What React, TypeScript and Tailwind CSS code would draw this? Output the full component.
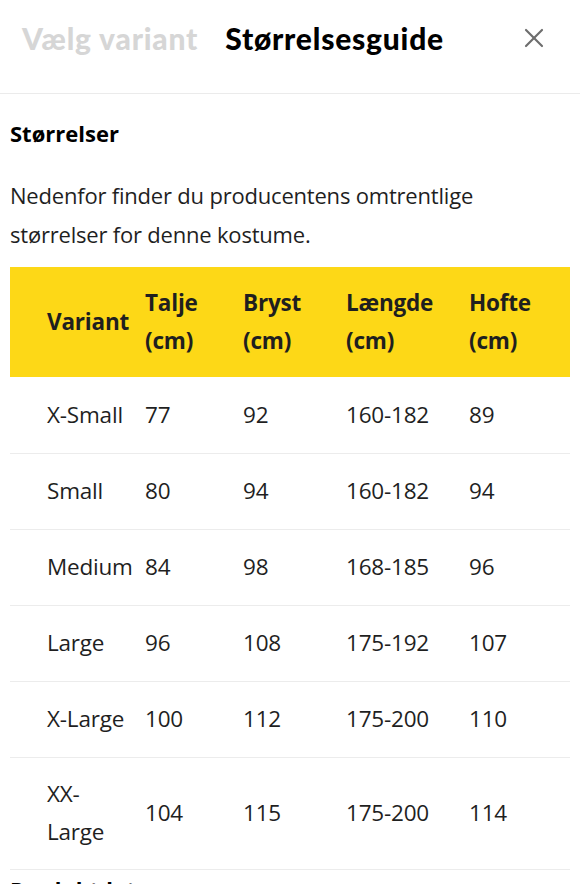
import { X } from "lucide-react";

const ROWS = [
  ["X-Small", "77", "92", "160-182", "89"],
  ["Small", "80", "94", "160-182", "94"],
  ["Medium", "84", "98", "168-185", "96"],
  ["Large", "96", "108", "175-192", "107"],
  ["X-Large", "100", "112", "175-200", "110"],
  ["XX-Large", "104", "115", "175-200", "114"],
];

const HEADS = ["Talje", "Bryst", "Længde", "Hofte"];

export default function App() {
  return (
    <div className="w-[580px] h-[884px] overflow-hidden bg-white text-[#1f1f1f] font-['Open_Sans',sans-serif]">
      <header className="h-[94px] flex items-start border-b border-[#ebebeb] pt-[18px] pl-[22px] pr-[30px]">
        <div className="flex gap-[27px] font-['Lato',sans-serif] font-black text-[30px] leading-[40px] tracking-[0.8px]">
          <span className="text-[#d6d6d6]">Vælg variant</span>
          <span className="text-black">Størrelsesguide</span>
        </div>
        <button className="ml-auto mt-[4px] text-[#6e6e6e]">
          <X size={32} strokeWidth={1.6} />
        </button>
      </header>

      <section className="px-[10px]">
        <h2 className="mt-[24px] text-[22px] leading-[30px] font-bold text-black">Størrelser</h2>
        <p className="mt-[28px] text-[22px] leading-[39px] tracking-[-0.2px]">
          Nedenfor finder du producentens omtrentlige størrelser for denne kostume.
        </p>

        <table className="mt-[13px] w-[560px] table-fixed border-collapse text-[22.5px] leading-[38px] tracking-[-0.2px]">
          <colgroup>
            <col className="w-[135px]" />
            <col className="w-[98px]" />
            <col className="w-[103px]" />
            <col className="w-[123px]" />
            <col className="w-[101px]" />
          </colgroup>
          <thead>
            <tr className="bg-[#fdd817] h-[110px]">
              <th className="text-left font-bold pl-[37px] pr-0">Variant</th>
              {HEADS.map((h) => (
                <th key={h} className="text-left font-bold">
                  {h}
                  <br />
                  (cm)
                </th>
              ))}
            </tr>
          </thead>
          <tbody>
            {ROWS.map((r, i) => (
              <tr key={i} className={i === ROWS.length - 1 ? "h-[112px] border-b border-[#ececec]" : "h-[76px] border-b border-[#ececec]"}>
                <td className="pl-[37px] pr-0 whitespace-nowrap">
                  {r[0] === "XX-Large" ? (
                    <>
                      XX-
                      <br />
                      Large
                    </>
                  ) : (
                    r[0]
                  )}
                </td>
                {r.slice(1).map((v, j) => (
                  <td key={j}>{v}</td>
                ))}
              </tr>
            ))}
          </tbody>
        </table>

        <h2 className="mt-[4px] text-[22px] leading-[30px] font-bold text-black">Produktdata</h2>
      </section>
    </div>
  );
}
